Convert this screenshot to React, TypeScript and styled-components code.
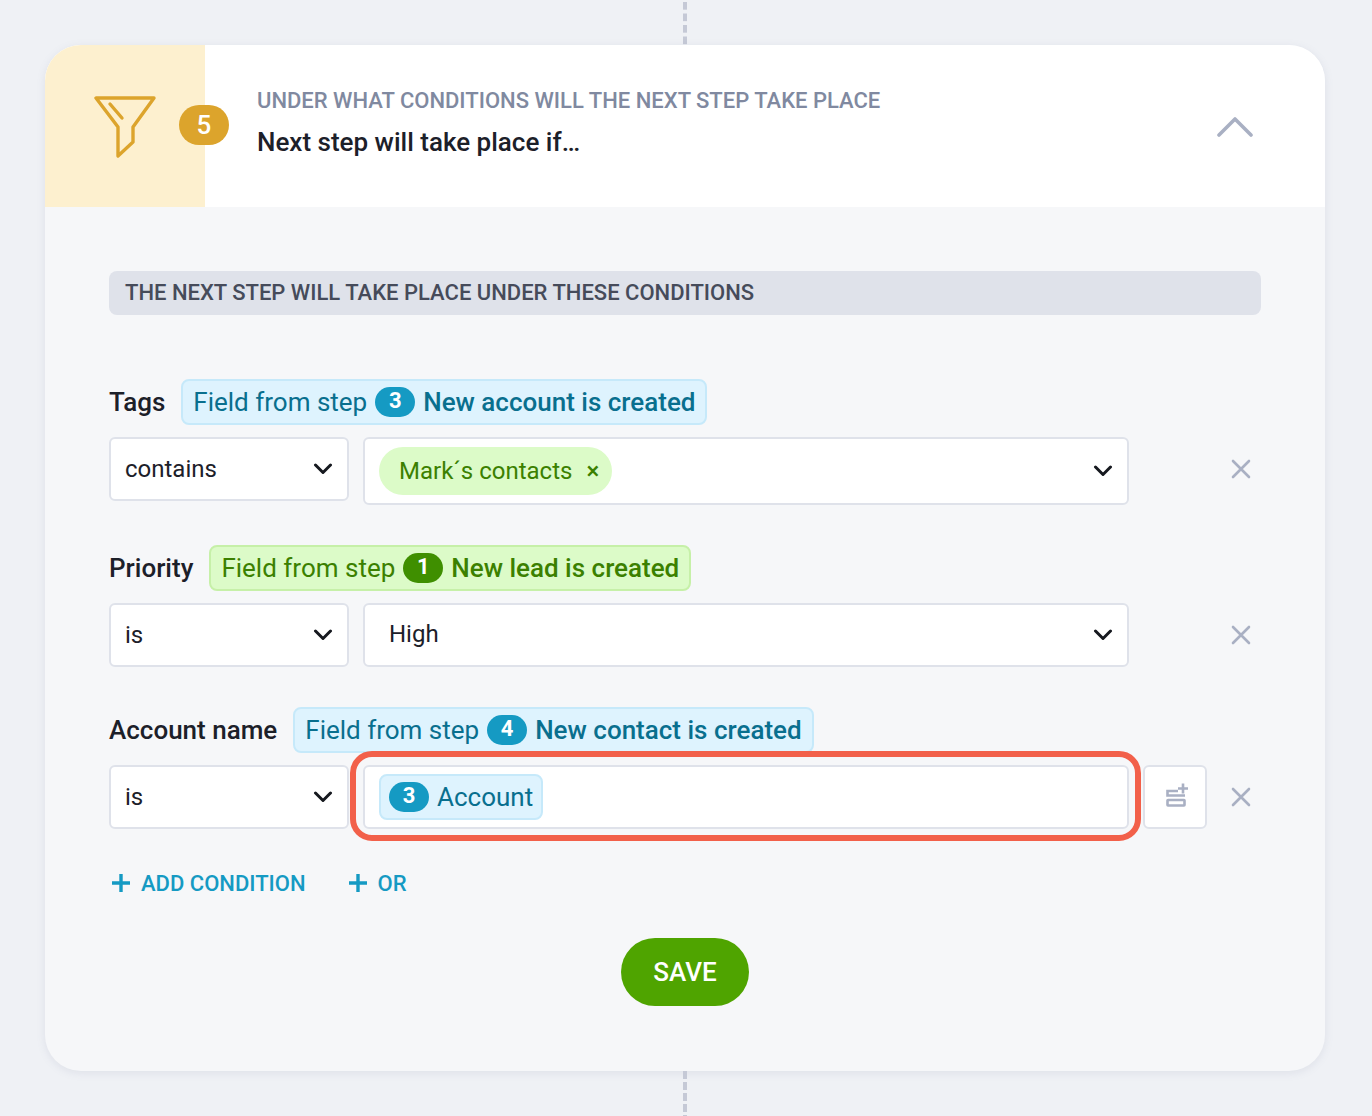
import React, { Fragment } from 'react';
import styled, { createGlobalStyle } from 'styled-components';

const GlobalStyle = createGlobalStyle`
  html, body {
    margin: 0;
    padding: 0;
    background: #eff1f5;
    font-family: Roboto, "Liberation Sans", sans-serif;
    color: #1c2029;
  }
`;

const StyledPage = styled.div`
  width: 1370px;
  height: 1116px;
  display: flex;
  flex-direction: column;
  align-items: center;
  overflow: hidden;
`;

const StyledConnector = styled.div<{ $top?: boolean }>`
  width: 4px;
  height: 45px;
  flex-shrink: 0;
  background-image: linear-gradient(to bottom, #c5c9d6 8px, transparent 8px);
  background-size: 4px ${(p) => (p.$top ? '11.5px' : '11px')};
  background-position: 0 ${(p) => (p.$top ? '2px' : '0')};
`;

const StyledCard = styled.div`
  width: 1280px;
  height: 1026px;
  flex-shrink: 0;
  border-radius: 36px;
  overflow: hidden;
  background: #f6f7f9;
  box-shadow: 0 2px 8px rgba(120, 130, 160, 0.14);
`;

const StyledHeader = styled.div`
  height: 162px;
  display: flex;
  background: #fff;
  position: relative;
`;

const StyledIconPanel = styled.div`
  width: 160px;
  flex-shrink: 0;
  background: #fdf0cf;
  display: flex;
  align-items: center;
  padding-left: 49px;
  box-sizing: border-box;
`;

const StyledStepBadge = styled.div`
  position: absolute;
  left: 134px;
  top: 60px;
  width: 50px;
  height: 40px;
  border-radius: 20px;
  background: #dca42c;
  color: #fff;
  font-size: 26px;
  font-weight: 500;
  display: flex;
  align-items: center;
  justify-content: center;
`;

const StyledHeaderText = styled.div`
  flex: 1;
  padding: 42px 0 0 52px;
`;

const StyledOverline = styled.div`
  font-size: 22px;
  line-height: 28px;
  font-weight: 500;
  color: #8089a0;
`;

const StyledHeading = styled.div`
  margin-top: 11px;
  font-size: 26px;
  line-height: 32px;
  font-weight: 500;
`;

const StyledCollapse = styled.div`
  width: 38px;
  margin: 70px 71px 0 0;
  color: #a9b0c3;
`;

const StyledBody = styled.div`
  padding: 64px 64px 0;
  display: flex;
  flex-direction: column;
`;

const StyledSectionTitle = styled.div`
  height: 44px;
  padding-left: 16px;
  border-radius: 8px;
  background: #dfe2ea;
  color: #464b5a;
  font-size: 22px;
  font-weight: 500;
  line-height: 44px;
  margin-bottom: 64px;
`;

const StyledCondition = styled.div`
  margin-bottom: 40px;
`;

const StyledFieldHead = styled.div`
  height: 46px;
  display: flex;
  align-items: center;
  gap: 16px;
  margin-bottom: 12px;
`;

const StyledFieldName = styled.div`
  font-size: 26px;
  font-weight: 500;
`;

const StyledChip = styled.div<{ $green?: boolean }>`
  height: 46px;
  box-sizing: border-box;
  display: flex;
  align-items: center;
  padding: 0 10px;
  border-radius: 8px;
  border: 2px solid ${(p) => (p.$green ? '#c6f0a8' : '#c6e9fa')};
  background: ${(p) => (p.$green ? '#dcfbc8' : '#def3fe')};
  color: ${(p) => (p.$green ? '#3b8000' : '#096f8e')};
  font-size: 26px;
  white-space: nowrap;
`;

const StyledChipStrong = styled.span`
  font-weight: 500;
`;

const StyledNumber = styled.span<{ $green?: boolean; $first?: boolean }>`
  width: 40px;
  height: 30px;
  margin: 0 8px 0 ${(p) => (p.$first ? '0' : '8px')};
  border-radius: 15px;
  background: ${(p) => (p.$green ? '#3f8f00' : '#159ac3')};
  color: #fff;
  font-size: 22px;
  font-weight: 700;
  display: inline-flex;
  align-items: center;
  justify-content: center;
  padding-bottom: 3px;
  box-sizing: border-box;
`;

const StyledControls = styled.div`
  display: grid;
  grid-template-columns: 240px 766px 64px 40px;
  column-gap: 14px;
  align-items: start;
`;

const StyledBox = styled.div<{ $tall?: boolean }>`
  position: relative;
  height: ${(p) => (p.$tall ? '68px' : '64px')};
  box-sizing: border-box;
  display: flex;
  align-items: center;
  justify-content: space-between;
  background: #fff;
  border: 2px solid #dfe2ea;
  border-radius: 6px;
  font-size: 24px;
  padding: 0 14px;
`;

const StyledValue = styled.div`
  padding-left: 10px;
  margin-top: -2px;
`;

const StyledTag = styled.div`
  height: 48px;
  display: flex;
  align-items: center;
  gap: 14px;
  padding: 0 13px 0 20px;
  border-radius: 24px;
  background: #dcfbc8;
  color: #3b8000;
  font-size: 24px;
`;

const StyledTagClose = styled.span`
  font-size: 24px;
  font-weight: 500;
`;

const StyledChevron = styled.svg`
  width: 20px;
  height: 12px;
  flex-shrink: 0;
  color: #16191f;
`;

const StyledHighlight = styled.div`
  position: absolute;
  top: -16px;
  bottom: -14px;
  left: -15px;
  right: -14px;
  border: 6px solid #f2604a;
  border-radius: 22px;
  pointer-events: none;
`;

const StyledValueChip = styled(StyledChip)`
  padding: 0 8px;
`;

const StyledSideButton = styled.div`
  height: 64px;
  box-sizing: border-box;
  background: #fff;
  border: 2px solid #dfe2ea;
  border-radius: 6px;
  display: flex;
  align-items: center;
  justify-content: center;
  color: #a9b0c3;
`;

const StyledRemove = styled.div`
  height: 64px;
  display: flex;
  align-items: center;
  justify-content: center;
  color: #a9b0c3;
`;

const StyledActions = styled.div`
  height: 28px;
  display: flex;
  align-items: center;
  gap: 42px;
  padding-left: 2px;
`;

const StyledAction = styled.div`
  display: flex;
  align-items: center;
  gap: 10px;
  color: #159ac3;
  font-size: 22px;
  font-weight: 500;
`;

const StyledSave = styled.div`
  align-self: center;
  width: 128px;
  height: 68px;
  margin-top: 41px;
  border-radius: 34px;
  background: #4fa400;
  color: #fff;
  font-size: 26px;
  font-weight: 500;
  display: flex;
  align-items: center;
  justify-content: center;
`;

const Chevron = () => (
  <StyledChevron viewBox="0 0 20 12" fill="none" stroke="currentColor" strokeWidth="3" strokeLinecap="round" strokeLinejoin="round">
    <path d="M2.5 2l7.5 7.5L17.5 2" />
  </StyledChevron>
);

const Cross = () => (
  <svg width="20" height="20" viewBox="0 0 20 20" fill="none" stroke="currentColor" strokeWidth="2.6" strokeLinecap="round">
    <path d="M2 2l16 16M18 2L2 18" />
  </svg>
);

const Plus = () => (
  <svg width="20" height="20" viewBox="0 0 20 20" fill="none" stroke="currentColor" strokeWidth="3.4">
    <path d="M10 1v18M1 10h18" />
  </svg>
);

const Select = ({ value }: { value: string }) => (
  <StyledBox>
    {value}
    <Chevron />
  </StyledBox>
);

const FieldChip = ({ step, title, green }: { step: number; title: string; green?: boolean }) => (
  <StyledChip $green={green}>
    Field from step
    <StyledNumber $green={green}>{step}</StyledNumber>
    <StyledChipStrong>{title}</StyledChipStrong>
  </StyledChip>
);

export default () => {
  return (
    <Fragment>
      <GlobalStyle />
      <StyledPage>
        <StyledConnector $top />
        <StyledCard>
          <StyledHeader>
            <StyledIconPanel>
              <svg width="62" height="64" viewBox="0 0 62 64" fill="none" stroke="#dca42c" strokeWidth="3.4" strokeLinecap="round" strokeLinejoin="round">
                <path d="M2 4h58L39 33v15L24 62V33z" />
                <path d="M16 10l12 14" />
              </svg>
            </StyledIconPanel>
            <StyledStepBadge>5</StyledStepBadge>
            <StyledHeaderText>
              <StyledOverline>UNDER WHAT CONDITIONS WILL THE NEXT STEP TAKE PLACE</StyledOverline>
              <StyledHeading>Next step will take place if…</StyledHeading>
            </StyledHeaderText>
            <StyledCollapse>
              <svg width="38" height="22" viewBox="0 0 38 22" fill="none" stroke="currentColor" strokeWidth="3.6" strokeLinecap="round" strokeLinejoin="round">
                <path d="M3 20L19 4l16 16" />
              </svg>
            </StyledCollapse>
          </StyledHeader>
          <StyledBody>
            <StyledSectionTitle>THE NEXT STEP WILL TAKE PLACE UNDER THESE CONDITIONS</StyledSectionTitle>

            <StyledCondition>
              <StyledFieldHead>
                <StyledFieldName>Tags</StyledFieldName>
                <FieldChip step={3} title="New account is created" />
              </StyledFieldHead>
              <StyledControls>
                <Select value="contains" />
                <StyledBox $tall>
                  <StyledTag>
                    Mark´s contacts
                    <StyledTagClose>×</StyledTagClose>
                  </StyledTag>
                  <Chevron />
                </StyledBox>
                <div />
                <StyledRemove>
                  <Cross />
                </StyledRemove>
              </StyledControls>
            </StyledCondition>

            <StyledCondition>
              <StyledFieldHead>
                <StyledFieldName>Priority</StyledFieldName>
                <FieldChip green step={1} title="New lead is created" />
              </StyledFieldHead>
              <StyledControls>
                <Select value="is" />
                <StyledBox>
                  <StyledValue>High</StyledValue>
                  <Chevron />
                </StyledBox>
                <div />
                <StyledRemove>
                  <Cross />
                </StyledRemove>
              </StyledControls>
            </StyledCondition>

            <StyledCondition>
              <StyledFieldHead>
                <StyledFieldName>Account name</StyledFieldName>
                <FieldChip step={4} title="New contact is created" />
              </StyledFieldHead>
              <StyledControls>
                <Select value="is" />
                <StyledBox>
                  <StyledValueChip>
                    <StyledNumber $first>3</StyledNumber>
                    Account
                  </StyledValueChip>
                  <StyledHighlight />
                </StyledBox>
                <StyledSideButton>
                  <svg width="26" height="28" viewBox="0 0 26 28" fill="none" stroke="currentColor" strokeWidth="2.6">
                    <path d="M16 8H5.5v4.5H23" />
                    <rect x="5.5" y="17" width="17" height="5.5" rx="0.5" />
                    <path d="M21 0.5v10M16 5.5h10" />
                  </svg>
                </StyledSideButton>
                <StyledRemove>
                  <Cross />
                </StyledRemove>
              </StyledControls>
            </StyledCondition>

            <StyledActions>
              <StyledAction>
                <Plus />
                ADD CONDITION
              </StyledAction>
              <StyledAction>
                <Plus />
                OR
              </StyledAction>
            </StyledActions>

            <StyledSave>SAVE</StyledSave>
          </StyledBody>
        </StyledCard>
        <StyledConnector />
      </StyledPage>
    </Fragment>
  );
};
